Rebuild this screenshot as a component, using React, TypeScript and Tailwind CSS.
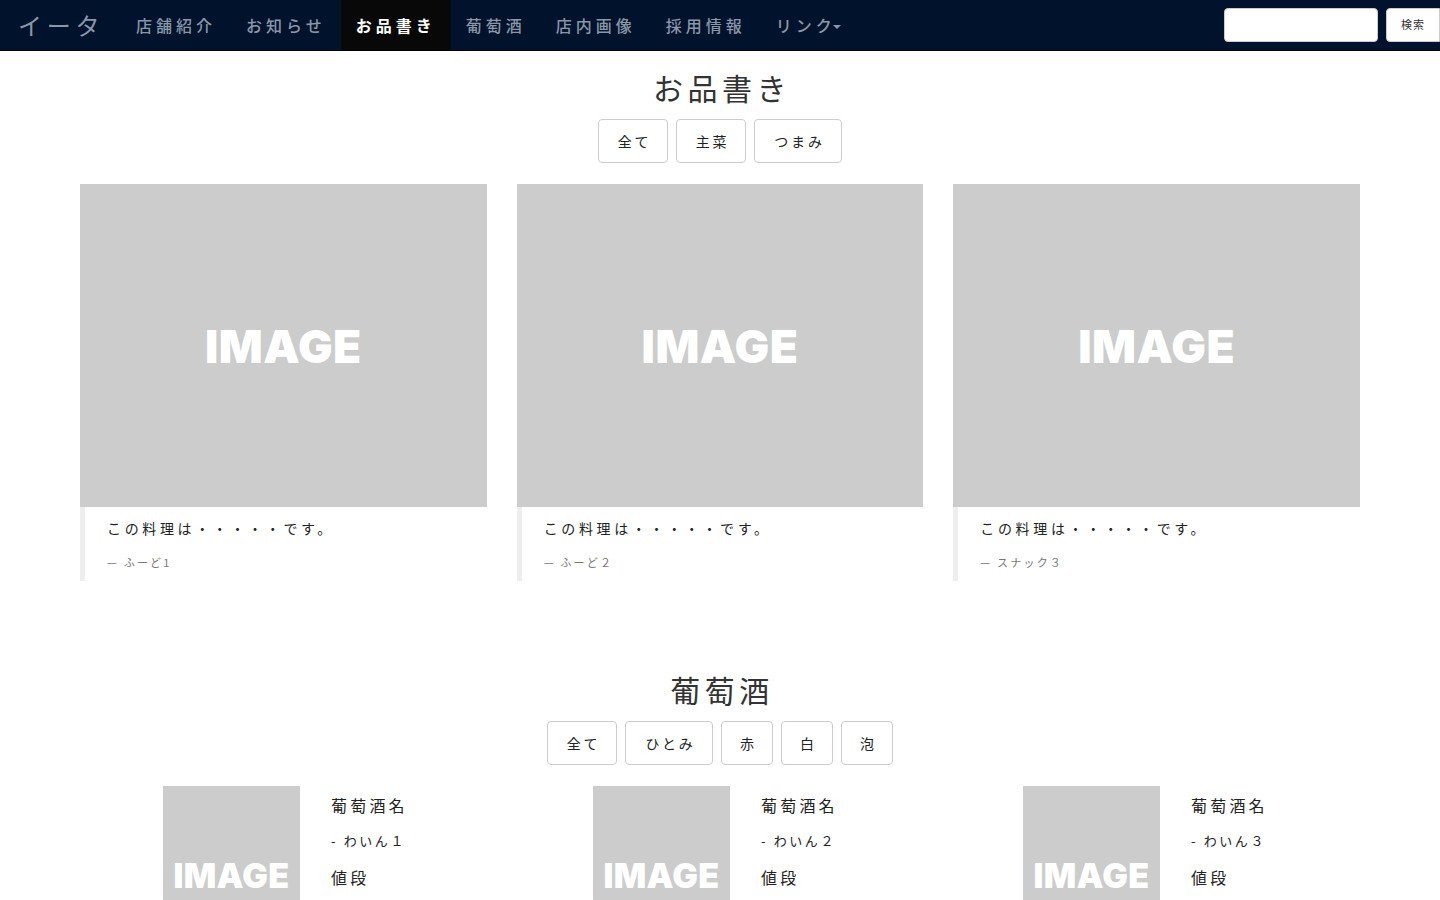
import React from "react";

const JP = { fontFamily: '"Noto Sans CJK JP", "Noto Sans", sans-serif' } as React.CSSProperties;

function ImageBox({ className, textClass }: { className: string; textClass: string }) {
  return (
    <div className={`bg-[#cccccc] flex items-center justify-center overflow-hidden shrink-0 ${className}`}>
      <span
        className={`text-white font-black tracking-[0.01em] leading-none ${textClass}`}
        style={{ fontFamily: '"Inter", "Liberation Sans", sans-serif' }}
      >
        IMAGE
      </span>
    </div>
  );
}

function FilterButton({ label, w }: { label: string; w: string }) {
  return (
    <button
      className={`h-[44px] ${w} rounded-[4px] border border-[#cccccc] bg-white text-[14px] text-[#222] tracking-[0.2em] pl-[3px] flex items-center justify-center`}
    >
      {label}
    </button>
  );
}

export default function App() {
  const navItems = ["店舗紹介", "お知らせ", "お品書き", "葡萄酒", "店内画像", "採用情報"];
  const foods = [
    { text: "この料理は・・・・・です。", by: "ふーど1" },
    { text: "この料理は・・・・・です。", by: "ふーど２" },
    { text: "この料理は・・・・・です。", by: "スナック３" },
  ];
  const wines = ["わいん１", "わいん２", "わいん３"];
  return (
    <div className="min-h-[900px] bg-white text-[#333]" style={JP}>
      {/* Navbar */}
      <nav className="h-[51px] bg-[#01122d] border-b border-black flex items-stretch">
        <div className="w-[121px] pl-[18px] flex items-center text-[24px] text-[#8a97a6] tracking-[0.2em] whitespace-nowrap">
          イータ
        </div>
        <ul className="flex items-stretch">
          {navItems.map((n) => (
            <li
              key={n}
              className={`flex items-center px-[15px] text-[16px] tracking-[0.25em] whitespace-nowrap ${
                n === "お品書き" ? "bg-[#080808] text-white font-bold" : "text-[#8a97a6] font-medium"
              }`}
            >
              {n}
            </li>
          ))}
          <li className="flex items-center px-[15px] text-[16px] tracking-[0.25em] text-[#8a97a6] font-medium whitespace-nowrap">
            リンク
            <span className="inline-block ml-[-3px] mt-[3px] w-0 h-0 border-l-[4px] border-r-[4px] border-t-[4px] border-l-transparent border-r-transparent border-t-[#8a97a6]" />
          </li>
        </ul>
        <div className="ml-auto flex items-center gap-[8px] pb-[1px]">
          <input className="w-[154px] h-[34px] rounded-[4px] bg-white border border-[#ccc]" />
          <button className="w-[54px] h-[34px] rounded-l-[4px] bg-white border border-[#ccc] text-[11px] text-[#333] tracking-[0.1em]">
            検索
          </button>
        </div>
      </nav>

      {/* お品書き */}
      <section className="pt-[17px]">
        <h2 className="text-center text-[30px] leading-[38px] tracking-[0.15em] pl-[4px] text-[#333]">お品書き</h2>
        <div className="mt-[13px] flex justify-center gap-[8px]">
          <FilterButton label="全て" w="w-[70px]" />
          <FilterButton label="主菜" w="w-[70px]" />
          <FilterButton label="つまみ" w="w-[88px]" />
        </div>
        <div className="mt-[21px] mx-auto w-[1280px] grid grid-cols-3 gap-x-[30px]">
          {foods.map((f, i) => (
            <div key={i}>
              <ImageBox className="h-[323px]" textClass="text-[46px]" />
              <blockquote className="border-l-[5px] border-[#eeeeee] pl-[22px] pt-[10px] h-[74px]">
                <p className="text-[14px] leading-[22px] tracking-[0.26em] text-[#222] whitespace-nowrap">{f.text}</p>
                <footer className="mt-[15px] text-[11px] leading-[16px] text-[#777] tracking-[0.2em] whitespace-nowrap">
                  — {f.by}
                </footer>
              </blockquote>
            </div>
          ))}
        </div>
      </section>

      {/* 葡萄酒 */}
      <section className="pt-[89px]">
        <h2 className="text-center text-[30px] leading-[38px] tracking-[0.15em] pl-[4px] text-[#333]">葡萄酒</h2>
        <div className="mt-[13px] flex justify-center gap-[8px]">
          <FilterButton label="全て" w="w-[70px]" />
          <FilterButton label="ひとみ" w="w-[88px]" />
          <FilterButton label="赤" w="w-[52px]" />
          <FilterButton label="白" w="w-[52px]" />
          <FilterButton label="泡" w="w-[52px]" />
        </div>
        <div className="mt-[21px] ml-[163px] grid grid-cols-[430px_430px_431px]">
          {wines.map((w, i) => (
            <div key={i} className="flex">
              <ImageBox className="w-[137px] h-[180px]" textClass="text-[34px]" />
              <div className="ml-[31px] pt-[8px] whitespace-nowrap">
                <div className="text-[16px] leading-[22px] tracking-[0.2em] text-[#222]">葡萄酒名</div>
                <div className="mt-[16px] text-[13px] leading-[18px] tracking-[0.2em] text-[#222]">- {w}</div>
                <div className="mt-[16px] text-[16px] leading-[22px] tracking-[0.2em] text-[#222]">値段</div>
              </div>
            </div>
          ))}
        </div>
      </section>
    </div>
  );
}
